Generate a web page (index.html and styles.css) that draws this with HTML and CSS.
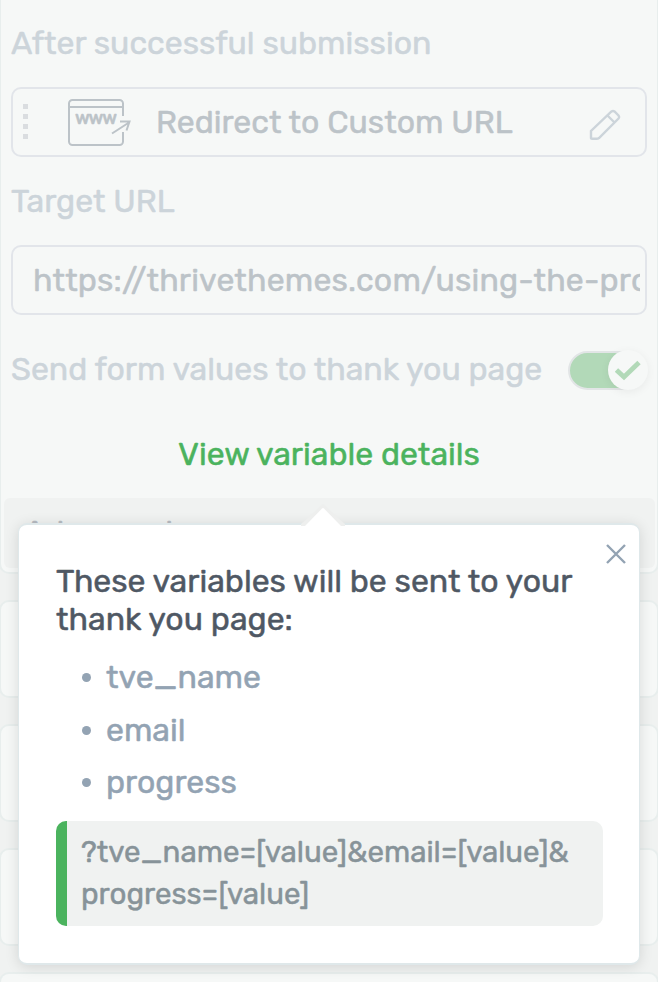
FILE: index.html
```
<!DOCTYPE html>
<html lang="en">
<head>
  <meta charset="UTF-8">
  <meta name="viewport" content="width=device-width, initial-scale=1.0">
  <title>Form settings</title>
  <link rel="stylesheet" href="styles.css">
</head>
<body>
  <main class="sidebar">
    <!-- Submission options -->
    <section class="panel panel-open">
      <div class="panel-body">
        <h2 class="label label-after">After successful submission</h2>
        <div class="field action">
          <span class="drag"><i></i><i></i><i></i><i></i></span>
          <svg class="www-icon" width="66" height="50" viewBox="0 0 66 50">
            <path d="M56 18V5.500a3.500 3.500 0 0 0-3.500-3.500h-47A3.500 3.500 0 0 0 2 5.500v38A3.500 3.500 0 0 0 5.500 47h47a3.500 3.500 0 0 0 3.500-3.500V34M2 9h54" />
            <path d="M45 35.500 62 24.500M53 23.500h9.500l-3 9" />
            <text x="8" y="26" textLength="42">www</text>
          </svg>
          <span class="action-name">Redirect to Custom URL</span>
          <svg class="pencil" width="32" height="32" viewBox="0 0 32 32">
            <path d="M2 29.500V22L22.500 2.500Q24 1.300 25.500 2.500L29.500 6.500Q30.700 8 29.500 9.500L10 29Q9 29.800 7.500 29.800H3Q2 29.800 2 29M18.500 6.500l7 7" />
          </svg>
        </div>

        <h2 class="label label-target">Target URL</h2>
        <div class="field url"><span class="url-text">https://thrivethemes.com/using-the-pro</span></div>

        <div class="switch-row">
          <h2 class="label">Send form values to thank you page</h2>
          <div class="switch">
            <div class="knob">
              <svg width="26" height="21" viewBox="0 0 26 21"><path d="M1.500 10l7.500 7L24 2.500" /></svg>
            </div>
          </div>
        </div>

        <a class="details">View variable details</a>
      </div>
      <div class="advanced">Advanced</div>
    </section>

    <section class="panel"></section>
    <section class="panel"></section>
    <section class="panel"></section>
    <section class="panel"></section>
  </main>

  <!-- Variable details popover -->
  <div class="popover">
    <svg class="arrow" width="44" height="22" viewBox="0 0 44 22">
      <path d="M0 20 L22 0 L44 20 V22 H0Z" fill="#eeefee" />
      <path d="M4 22 L21 4.500 Q22 3.500 23 4.500 L40 22Z" fill="#fff" />
    </svg>
    <svg class="close" width="22" height="22" viewBox="0 0 22 22"><path d="M2 2l18 18M20 2L2 20" /></svg>
    <p class="intro">These variables will be sent to your<br>thank you page:</p>
    <ul class="vars">
      <li>tve_name</li>
      <li>email</li>
      <li>progress</li>
    </ul>
    <div class="query">?tve_name=[value]&amp;email=[value]&amp;<br>progress=[value]</div>
  </div>
</body>
</html>
```
FILE: styles.css
```
* {
  box-sizing: border-box;
}

body {
  margin: 0;
  height: 982px;
  position: relative;
  overflow: hidden;
  background: #f0f2f1;
  font-family: Rubik, Roboto, sans-serif;
  font-size: 32px;
  white-space: nowrap;
  -webkit-text-stroke: 0.5px;
}

/* ======= Panels ======= */
.sidebar {
  display: flex;
  flex-direction: column;
  gap: 26px;
  height: 982px;
  margin-left: -1px;
  margin-right: -1px;
  overflow: hidden;
}

.panel {
  flex: none;
  height: 98px;
  border: 2px solid #e8eeed;
  border-radius: 10px;
  background: #f6f8f7;
}

.panel:last-child {
  flex: 1;
  height: auto;
  border-bottom: 0;
  border-radius: 10px 10px 0 0;
}

.panel-open {
  height: 574px;
  border-top: 0;
  border-radius: 0 0 10px 10px;
  padding: 0 2px 0 3px;
}

.panel-body {
  height: 498px;
  padding: 24px 8px 0 7px;
}

.label {
  margin: 0;
  font-size: 32px;
  font-weight: 400;
  line-height: 38px;
  color: #ccd4da;
}

.label-target {
  margin-top: 25px;
}

.field {
  display: flex;
  align-items: center;
  height: 70px;
  border: 2px solid #e2e5ea;
  border-radius: 10px;
  color: #bcc3c8;
}

.action {
  margin-top: 25px;
  padding: 0 24px 0 10px;
}

.drag {
  display: flex;
  flex-direction: column;
  gap: 5px;
  margin-bottom: 1px;
}

.drag i {
  width: 5px;
  height: 5px;
  background: #dadde0;
}

.www-icon {
  margin: 2px 0 0 39px;
  fill: none;
  stroke: #bcc3c8;
  stroke-width: 2;
}

.www-icon text {
  font-size: 18px;
  font-weight: 500;
  fill: #bcc3c8;
  stroke-width: 0.4;
}

.action-name {
  margin-left: 23px;
}

.pencil {
  margin: 6px 0 0 auto;
  fill: none;
  stroke: #ccd4da;
  stroke-width: 2.4;
}

.url {
  margin-top: 25px;
  padding: 0 5px 0 20px;
}

.url-text {
  flex: 1;
  overflow: hidden;
  letter-spacing: 0.18px;
}

.switch-row {
  display: flex;
  align-items: center;
  justify-content: space-between;
  margin-top: 34px;
  height: 40px;
}

/* ======= Switch ======= */
.switch {
  display: flex;
  justify-content: flex-end;
  align-items: center;
  width: 79px;
  height: 39px;
  margin: 2px 0 0;
  border: 2px solid #e2e5e6;
  border-radius: 20px;
  background: #b2d9b8;
}

.knob {
  display: flex;
  flex: none;
  align-items: center;
  justify-content: center;
  width: 40px;
  height: 40px;
  margin-right: -3px;
  border-radius: 50%;
  background: #f6f8f7;
  box-shadow: 0 2px 10px rgba(0, 0, 0, 0.06);
}

.knob path {
  fill: none;
  stroke: #b2d9b8;
  stroke-width: 4.8;
}

.details {
  display: block;
  margin-top: 46px;
  text-align: center;
  line-height: 38px;
  color: #4bb35e;
}

.advanced {
  height: 70px;
  padding: 15px 20px;
  border-radius: 6px;
  background: #f0f2f1;
  color: #b6bbc1;
}

/* ======= Popover ======= */
.popover {
  position: absolute;
  top: 523px;
  left: 18px;
  width: 622px;
  height: 442px;
  padding: 37px 36px 0 37px;
  border: solid #dfe8ea;
  border-width: 2px 1px;
  border-radius: 9px;
  background: #fff;
  box-shadow: 0 2px 14px rgba(0, 0, 0, 0.12);
}

.arrow {
  position: absolute;
  top: -21px;
  left: 282px;
}

.close {
  position: absolute;
  top: 18px;
  right: 12px;
  fill: none;
  stroke: #93a3b3;
  stroke-width: 2.4;
}

.intro {
  margin: 0;
  line-height: 38px;
  color: #4f5864;
}

.vars {
  margin: 13px 0 0;
  padding: 0;
  list-style: none;
  color: #93a3b3;
}

.vars li {
  display: flex;
  align-items: center;
  height: 52.500px;
  margin-left: 26px;
}

.vars li::before {
  content: "";
  width: 9px;
  height: 9px;
  margin: 1px 15px 0 0;
  border-radius: 50%;
  background: #93a3b3;
}

.query {
  height: 105px;
  margin-top: 12px;
  padding: 10px 14px;
  border-left: 11px solid #4bb35e;
  border-radius: 10px;
  background: #f0f2f1;
  font-size: 29.500px;
  line-height: 42px;
  color: #879399;
}
```
